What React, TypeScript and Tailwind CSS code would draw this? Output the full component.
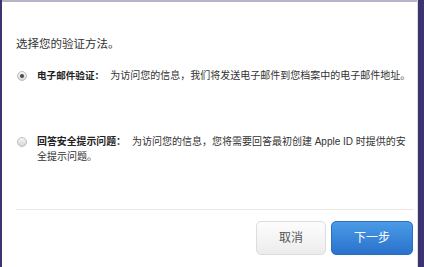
import React from "react";

const font = '"Liberation Sans", "Noto Sans CJK SC", sans-serif';

function Radio({ checked }: { checked?: boolean }) {
  return (
    <span className="mt-[2.5px] flex h-[10px] w-[10px] shrink-0 items-center justify-center rounded-full border border-[#bdbdbd] bg-gradient-to-b from-[#f6f6f6] to-[#d6d6d6]">
      {checked && <span className="h-[4px] w-[4px] rounded-full bg-[#4a4a4a]" />}
    </span>
  );
}

export default function App() {
  return (
    <div className="flex h-[267px] w-[424px] overflow-hidden bg-[#3b3470]" style={{ fontFamily: font }}>
      <div className="ml-[2px] flex h-full w-[416px] flex-col border-r border-[#d8d8e0] bg-white">
        <div className="h-[2px] w-full shrink-0 bg-[#b7b4c8]" />
        <div className="flex flex-1 flex-col pl-[14px] pr-[3px]">
          <p className="mt-[34px] text-[11.5px] leading-[16px] text-[#333]">选择您的验证方法。</p>
          <div className="mt-[16px] flex items-start gap-[10px] pl-[1px]">
            <Radio checked />
            <p className="whitespace-nowrap text-[10px] leading-[15px] text-[#333]">
              <span className="text-[9.6px] font-bold text-[#222]">电子邮件验证：</span>
              <span className="ml-[6px]">为访问您的信息，我们将发送电子邮件到您档案中的电子邮件地址。</span>
            </p>
          </div>
          <div className="mt-[51px] flex items-start gap-[10px] pl-[1px]">
            <Radio />
            <p className="text-[10px] leading-[15px] text-[#333]">
              <span className="text-[9.9px] font-bold text-[#222]">回答安全提示问题：</span>
              <span className="ml-[6px]">
                为访问您的信息，您将需要回答最初创建 Apple ID 时提供的安
                <br />
                全提示问题。
              </span>
            </p>
          </div>
          <div className="mt-[45px] h-px w-full shrink-0 bg-[#ece6e6]" />
          <div className="mt-[11px] flex justify-end gap-[5px] pr-[1px]">
            <button className="flex h-[34px] w-[70px] items-center justify-center rounded-[5px] border border-[#ddd] bg-gradient-to-b from-[#fdfdfd] to-[#ececec] text-[12px] text-[#555]">
              取消
            </button>
            <button className="flex h-[34px] w-[82px] items-center justify-center rounded-[5px] border border-[#2a6fc0] bg-gradient-to-b from-[#4a9be6] to-[#2a72cc] text-[12px] text-white">
              下一步
            </button>
          </div>
        </div>
      </div>
    </div>
  );
}
